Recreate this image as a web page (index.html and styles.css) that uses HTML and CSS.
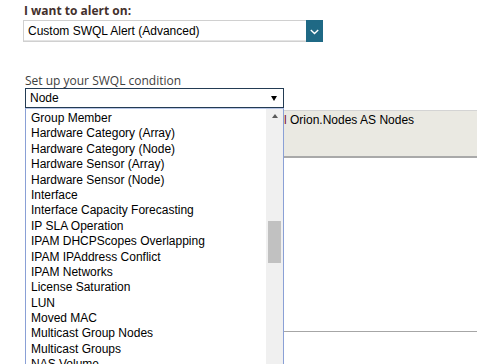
FILE: index.html
```html
<!DOCTYPE html>
<html>
<head>
<meta charset="utf-8">
<link rel="stylesheet" href="styles.css">
</head>
<body>
<div class="page">
  <div class="title">I want to alert on:</div>
  <div class="alert-select">
    <div class="alert-value">Custom SWQL Alert (Advanced)</div>
    <div class="alert-btn">
      <svg width="9" height="6" viewBox="0 0 9 6"><path d="M0.8 1 L4.5 4.6 L8.2 1" fill="none" stroke="#fff" stroke-width="1.4"/></svg>
    </div>
  </div>
  <div class="label">Set up your SWQL condition</div>
  <div class="node-select">
    <span class="node-value">Node</span>
    <span class="node-arrow"></span>
    <div class="listbox">
      <ul class="options">
        <li>Group Member</li>
        <li>Hardware Category (Array)</li>
        <li>Hardware Category (Node)</li>
        <li>Hardware Sensor (Array)</li>
        <li>Hardware Sensor (Node)</li>
        <li>Interface</li>
        <li>Interface Capacity Forecasting</li>
        <li>IP SLA Operation</li>
        <li>IPAM DHCPScopes Overlapping</li>
        <li>IPAM IPAddress Conflict</li>
        <li>IPAM Networks</li>
        <li>License Saturation</li>
        <li>LUN</li>
        <li>Moved MAC</li>
        <li>Multicast Group Nodes</li>
        <li>Multicast Groups</li>
        <li>NAS Volume</li>
      </ul>
      <div class="scrollbar">
        <div class="scroll-up"><span class="up-tri"></span></div>
        <div class="thumb"></div>
      </div>
    </div>
  </div>
  <div class="editor">
    <div class="code"><span class="kw">l</span> Orion.Nodes AS Nodes</div>
  </div>
  <div class="results"></div>
</div>
</body>
</html>
```
FILE: styles.css
```css
html, body {
  margin: 0;
  padding: 0;
  height: 364px;
  overflow: hidden;
  background: #fff;
}
.page {
  padding: 3px 0 0 23px;
  font-family: "Liberation Sans", Arial, sans-serif;
  font-size: 12px;
  color: #000;
}
.title {
  font-family: "Open Sans", sans-serif;
  font-weight: 700;
  font-size: 12px;
  line-height: 16px;
  color: #43302c;
  margin-left: 1px;
  margin-bottom: 1px;
}
.alert-select {
  display: flex;
  width: 300px;
  height: 22px;
}
.alert-value {
  flex: 1;
  border: 1px solid #d0d0d0;
  border-right: none;
  box-shadow: inset 0 -1px 0 #e4e4e4;
  line-height: 20px;
  padding-left: 4px;
}
.alert-btn {
  width: 17px;
  background: #1f6985;
  display: flex;
  align-items: center;
  justify-content: center;
  padding-top: 1px;
  box-sizing: border-box;
}
.label {
  font-family: "Open Sans", sans-serif;
  font-size: 12px;
  line-height: 15px;
  color: #404040;
  margin-top: 31px;
  margin-left: 2px;
}
.node-select {
  position: relative;
  margin-left: 2px;
  width: 259px;
  height: 20px;
  box-sizing: border-box;
  border: 1px solid #233b53;
  display: flex;
  align-items: center;
  justify-content: space-between;
  padding: 0 6px 0 4px;
}
.node-value {
  line-height: 18px;
}
.node-arrow {
  width: 0;
  height: 0;
  border-left: 3.5px solid transparent;
  border-right: 3.5px solid transparent;
  border-top: 5px solid #000;
  margin-top: 1px;
}
.listbox {
  position: absolute;
  top: 19px;
  left: -1px;
  width: 259px;
  height: 270px;
  box-sizing: border-box;
  border: 1px solid #8aa0d6;
  border-top-color: #b8c6e6;
  background: #fff;
  display: flex;
  z-index: 2;
}
.options {
  list-style: none;
  margin: 0;
  padding: 2px 0 0 5px;
  flex: 1;
}
.options li {
  height: 15.4px;
  line-height: 15.4px;
  white-space: nowrap;
}
.scrollbar {
  width: 17px;
  background: #f0f0f0;
  display: flex;
  flex-direction: column;
  align-items: center;
}
.scroll-up {
  height: 13px;
  width: 17px;
  display: flex;
  align-items: center;
  justify-content: center;
}
.up-tri {
  width: 0;
  height: 0;
  border-left: 3.5px solid transparent;
  border-right: 3.5px solid transparent;
  border-bottom: 4px solid #5a5a5a;
}
.thumb {
  width: 13px;
  height: 42px;
  margin-top: 99px;
  background: #c1c1c1;
}
.editor {
  margin-top: 2px;
  margin-left: 2px;
  height: 48px;
  box-sizing: border-box;
  background: #eae9e2;
  border-top: 1px solid #d4d4d4;
  border-bottom: 2px solid #a9a9a9;
}
.code {
  padding: 2px 0 0 259px;
  line-height: 15px;
  white-space: nowrap;
  color: #000;
}
.kw {
  color: #7a1030;
}
.results {
  margin-left: 2px;
  height: 174px;
  box-sizing: border-box;
  border-bottom: 1px solid #a6a6a6;
}
```
